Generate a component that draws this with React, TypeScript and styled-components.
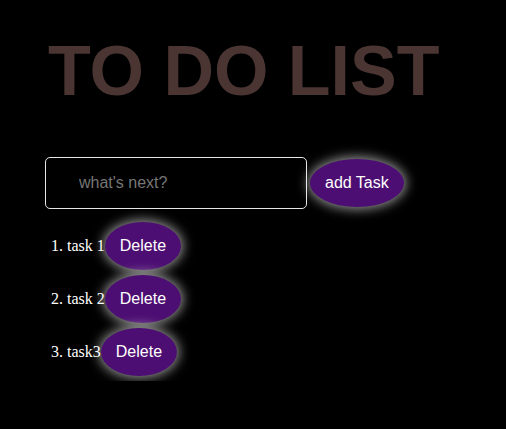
import React, { useState } from 'react';
import styled, { createGlobalStyle } from 'styled-components';

const GlobalStyle = createGlobalStyle`
    html, body {
        margin: 0;
        background: #000;
    }
    body {
        font-family: 'Liberation Serif', 'Times New Roman', serif;
    }
`;

const Page = styled.div`
    display: flex;
    flex-direction: column;
    align-items: flex-start;
    padding: 35px 0 0 45px;
`;

const Title = styled.h1`
    margin: 0 0 50px 3px;
    font-family: 'Liberation Sans', Arial, sans-serif;
    font-size: 70px;
    line-height: 72px;
    font-weight: bold;
    color: #4a3533;
`;

const Form = styled.form`
    display: flex;
    align-items: center;
    gap: 3px;
    margin: 0 0 13px;
`;

const Input = styled.input`
    box-sizing: border-box;
    width: 262px;
    height: 52px;
    padding: 0 0 0 33px;
    background: #000;
    border: 1px solid #e6e6e6;
    border-radius: 5px;
    outline: none;
    color: #fff;
    font-family: 'Liberation Sans', Arial, sans-serif;
    font-size: 16px;

    &::placeholder {
        color: #767676;
    }
`;

const PillButton = styled.button`
    padding: 15px;
    border: none;
    border-radius: 50%;
    background: #4c0e72;
    color: #fff;
    font-family: 'Liberation Sans', Arial, sans-serif;
    font-size: 16px;
    box-shadow: 0 0 12px 2px rgba(255, 255, 255, 0.6);
    cursor: pointer;
`;

const List = styled.ol`
    margin: 0;
    padding: 0 0 0 22px;
    color: #fff;
    font-size: 16px;
`;

const Item = styled.li`
    margin-bottom: 5px;
`;

export default function App() {
    const [tasks, setTasks] = useState(['task 1', 'task 2', 'task3']);
    const [text, setText] = useState('');

    const addTask = (e: React.FormEvent) => {
        e.preventDefault();
        if (!text.trim()) return;
        setTasks([...tasks, text.trim()]);
        setText('');
    };

    return (
        <>
            <GlobalStyle />
            <Page>
                <Title>TO DO LIST</Title>
                <Form onSubmit={addTask}>
                    <Input
                        placeholder="what's next?"
                        value={text}
                        onChange={(e) => setText(e.target.value)}
                    />
                    <PillButton type='submit'>add Task</PillButton>
                </Form>
                <List>
                    {tasks.map((t, i) => (
                        <Item key={i}>
                            {t}
                            <PillButton
                                onClick={() =>
                                    setTasks(tasks.filter((_, j) => j !== i))
                                }
                            >
                                Delete
                            </PillButton>
                        </Item>
                    ))}
                </List>
            </Page>
        </>
    );
}
